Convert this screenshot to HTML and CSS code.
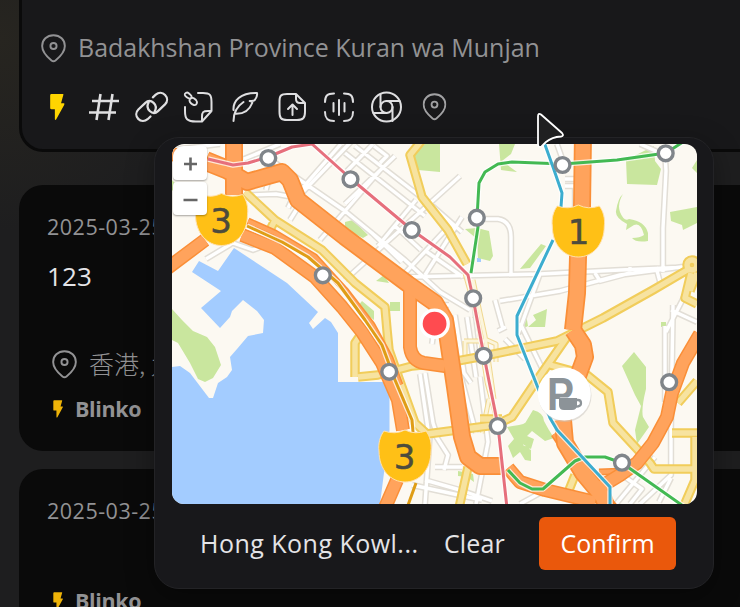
FILE: index.html
```html
<!DOCTYPE html>
<html lang="en">
<head>
<meta charset="utf-8">
<title>Notes</title>
<link rel="stylesheet" href="styles.css">
</head>
<body>
<svg class="symbols" aria-hidden="true">
  <symbol id="pin" viewBox="0 0 26 30"><path d="M13 1.2C6.1 1.2 1.2 6 1.2 12.4c0 6.8 5.2 11.4 9.7 15.1q2.1 1.7 4.2 0c4.5-3.7 9.7-8.3 9.7-15.1C24.8 6 19.900 1.200 13 1.200Z"/><circle cx="13" cy="12.400" r="3.200"/></symbol>
  <symbol id="bolt" viewBox="0 0 16 28"><path d="M2 0h12q1 0 .6 1L12.100 10H15q1.300 0 .7 1.200L7 27q-1 1.500-1.500 0V16.500H2q-1.500 0-1.500-1.500V1.500Q.5 0 2 0Z"/></symbol>
</svg>
<main class="feed">
  <section class="editor">
    <div class="place"><svg class="pin"><use href="#pin"/></svg><span>Badakhshan Province Kuran wa Munjan</span></div>
    <div class="tools">
      <svg class="bolt" viewBox="-8.700 -2 32 32"><use href="#bolt" width="15" height="28"/></svg>
      <svg class="heavy" viewBox="0 0 32 32"><path d="M12.500 3 8.500 29M24.500 3l-4 26M4 10h27M1 21.500h27"/></svg>
      <svg viewBox="1.300 1.200 28.700 28.700"><path d="M19 19.500c1.600-2.900 1.300-5.400-1-7.600s-5.200-2.200-7.400-.1l-6.300 6c-2.500 2.500-2.400 6-.1 8.400s5.800 2.500 8.400.3l2.600-2.400M13.500 11.500c-1.600 2.900-1.300 5.400 1 7.600s5.200 2.200 7.400.1l6.300-6c2.500-2.500 2.400-6 .1-8.400s-5.800-2.500-8.400-.3l-2.600 2.400"/></svg>
      <svg viewBox="1 0 32 32"><path d="M16 2h5c7 0 8.500 2 8.500 9v9L20 30.500h-6C5 30.500 3 28 3 20v-4M29.500 20H26c-5 0-6 1-6 6v4"/><path class="fine" d="M8.600 7.700C6 7.700 3 5 2.800 3.900 2.500 2 5 .8 6.700 2.200l1.800 1.700c1.500 1.400 1.500 2.900.1 3.800M8.300 7.600c2-1.700 4.200-.2 5.700 1.400 2 2.400.6 5.600-2.100 5-2-.4-4.400-2.700-4.400-4.400q0-1.200.8-2"/></svg>
      <svg viewBox="1 0 32 32"><path d="M4.500 30c0-9 4-15 10-19M4.500 19C4 10 11 1.500 28 2c.5 2.500-.5 5-2.300 7.200-1 1.200-3.700.8-5 .8 1.300.3 3 .8 2.500 2-2.500 6.500-8.200 11-16.200 10.800"/></svg>
      <svg viewBox="1 0 32 32"><path d="M20 3H11C5 3 3.500 4.500 3.500 10v11c0 6 1.500 8 7.500 8h10c6 0 8-2 8-8V12L20 3ZM20 3v5c0 3 1 4 4 4h5M16.500 24V14M12 18l4.500-4.500L21 18"/></svg>
      <svg viewBox="1 0 32 32"><path d="M2 11c0-6 2-8.500 9-8.500M21 2.500c7 0 9 2.500 9 8.500M2 21c0 6 2 9 9 9M21 30c7 0 9-3 9-9M10.500 12v8.500M16 9v15M21.500 12v8.500"/></svg>
      <svg viewBox=".5 0 32 32"><circle cx="16" cy="16" r="14.500"/><circle cx="16" cy="16" r="6"/><path d="M16 10h13M22 16v14M16 22H3M10 16V3"/></svg>
      <svg class="soft" viewBox="-3.500 -2 32 32"><use href="#pin" width="24" height="28"/></svg>
    </div>
  </section>
  <article class="card">
    <time>2025-03-25</time>
    <p class="body">123</p>
    <div class="place zh" lang="zh"><svg class="pin"><use href="#pin"/></svg><span>香港, 九龙</span></div>
    <div class="kind"><svg><use href="#bolt"/></svg><span>Blinko</span></div>
  </article>
  <article class="card second">
    <time>2025-03-25</time>
    <div class="kind"><svg><use href="#bolt"/></svg><span>Blinko</span></div>
  </article>
</main>

<div class="popover">
  <div class="map">
    <svg class="canvas" viewBox="172 144 525 360">
      <defs>
        <g id="minor">
          <path d="M355 146 430 204 462 232M345 153 425 216M374 146 387 156 380 163M172 150 220 144M244 159 280 144M268 158 345 211 405 260 440 292 470 310M254 179H288M274 159l-8 31M300 195l70-73M298 193l43-49M320 240l63-73M252 195l24-1 22 4M290 220l15-24M345 204l50-48M345 280l115-104M378 246l38-46M405 273l46-49M425 275l37-58M372 233l30 29M394 225l27 25M427 252l36 25M440 216l13 12M404 277 540 274 620 270 690 267M480 219h18q13 2 13 18v36M500 301l60-10 60-16 69-9M540 274l-22 60M595 273l5 8 30-8v-6M656 267l4 15M665 153l1 18-3 57v44M557 144l5 14M565 179h10M565 186h10v22M373 144l-26 27M640 144l18 8M449 305h-18M474 301l6 49M495 300l8 29M455 315l9 58 7 10M467 317l9 60M498 331l8-4M425 373l8 50 3 9M420 374l8 55M430 433l-5 71M434 433l14 22-4 15M435 467h27M480 377l8 65-12 62M461 377l15 56M425 480l35 10 32 11M412 485l70 15M520 323l38 78M673 305l-2 120v50l-31 29M665 326v76M671 310l26 12M684 297l-18 35M671 478l-12 24M622 475l20 14-12 15M655 457l-39 47M540 493l-20 11M230 242l23 8 24-9M206 259l25-15M288 208l12-25M505 339l20 20M438 300l-6 44"/>
        </g>
        <g id="yellow">
          <path d="M245 192 275 220 322 250 355 283 385 307 387 330 389 350 402 387 415 423 427 434 495 425 512 417 535 383 567 337M275 220l-4 8M427 134 410 155 422 197 448 230 467 264M358 377 378 375 412 366 452 362 484 356 557 341 603 318 653 290 689 269M355 377V343L366 327M550 365 587 375 608 392 613 423 650 463 654 469H697M672 433h25M678 403 697 381M695 437v43l-12 28M468 467 459 508M691 273l-6 25 12 6M697 273l-7 18M480 419h22M575 475l-8 20"/>
          <circle cx="692" cy="265" r="5"/>
        </g>
        <g id="thin"><path d="M465 273l12 43 10 66 11 42M473 280l12 56 9 63M464 341h22M465 341v20M485 339l11 5v18M489 399l-7 34"/></g>
        <g id="wide">
          <path d="M234 134v61M573 330 583 345 585 357 578 376M583 134 582 207 578 257 577 293 573 330M563 420 565 443 583 473 603 497 609 514M228 171 247 182 282 172 290 180 298 200 345 237 408 284 435 303 445 320 447 333 455 387 462 437 468 457 480 466H501"/>
        </g>
        <g id="mid">
          <path d="M172 154 208 165 228 173M410 290v57q2 14 14 16l21 3M165 270 205 240M242 235 275 248 315 277 342 307 362 332 382 363 398 400 403 430M397 480 384 510M700 334 683 363 672 393 667 417 653 443 637 463 620 475 597 489M508 468 520 482 545 490 595 502"/>
        </g>
        <g id="slip"><path d="M208 155 230 164M248 221 275 233 315 257 345 290 372 325 390 358 400 385M554 434 600 504M599 472l26-1M569 455l45 51"/></g>
        <path id="shield" d="M-21-25Q-10-21 0-26 10-21 21-25C25-20 27-12 26-5 26 14 14 26 0 26S-26 14-26-5C-27-12-25-20-21-25Z"/>
      </defs>
      <path class="land" d="M172 144h525v360H172z"/>
      <path class="water" d="M234 248 287 283 318 312 309 323 313 329 325 318 331 322 338 333V382h51.500v48L380 504H172V367L180 366 190 373 209 398h4L218 383l9-6 5-7-2-13 7-8 11-13 15-3 1-13-7-9-14-11-11 11-2 6-10 11-19-20 20-17-29-19 7-11 19 10ZM477 258h4v4h-4zM392 306h3v3h-3zM691 217h4v4h-4z"/>
      <path class="park" d="M172 309 182 320 193 331 207 337 215 347 221 365 213 378 205 382 198 379 190 363 178 343 172 340ZM425 144h15v28l-22-2-5-16ZM499 144h16l-4 10-9 7 15 11-16-2ZM477 228l12 3 4 25-3 5-12-3-1-19-12-10ZM626 160l28-14 1 15 6 8-4 16-30-1ZM623 194q-6 10-3 18 4 10 9 7 16 2 19 14v8q-12 2-16-3 8 0 12-3-3-13-10-10l-8 5 1-6q-12-6-11-13 2-13 7-17ZM670 212l27-5v16l-14 7-1-5-11-4ZM697 160l-5 8 5 5ZM520 269l21-25 5 2-16 22ZM522 313l4 1 2 12-6 3ZM533 315l14-6-2 18h-17l8-7ZM634 352l12 15v22q-5 20-3 28l6 10-12 17-2-14 6-24-6-11-13-29ZM507 427l12-2q9-1 12-10v14l-8 8v8l8 5v11l-6-1-5-8-7 6-5-12 6-7ZM533 410q11 3 11 11 4 8 10 17l-9 3-13-10-5 5 7 3-3 10-12-7 8-13-3-4ZM525 446l5 1-2 7-5-3ZM661 322h5v5h-5zM345 222l8-2 15 15-5 3-18-9ZM376 281l8-6 5 8ZM357 307l5-6 12 10v9ZM390 302h10v9h-10zM458 471l15 3 1 8-7-5-9-1ZM472 318l5-8 3 4ZM172 180l5 5-5 6Z"/>
      <use href="#minor" class="minor-edge"/><use href="#minor" class="minor-fill"/>
      <use href="#thin" class="thin-edge"/><use href="#thin" class="thin-fill"/>
      <use href="#yellow" class="yellow-edge"/><use href="#yellow" class="yellow-fill"/>
      <use href="#slip" class="slip-edge"/><use href="#slip" class="slip-fill"/>
      <use href="#mid" class="mid-edge"/><use href="#wide" class="wide-edge"/>
      <use href="#mid" class="mid-fill"/><use href="#wide" class="wide-fill"/>
      <path class="rail halo" d="M247 226 282 242 308 257 338 283 365 320 382 345 395 380 412 420 413 432"/>
      <path class="rail ochre" d="M247 226 282 242 308 257 338 283 365 320 382 345 395 380 412 420 413 432M416 483 407 508"/>
      <path class="rail halo" d="M208 159 233 165 248 163 268 157 292 147 312 144 350 178 412 230 450 257 468 275 473 298 484 356 498 426 507 508"/>
      <path class="rail red" d="M208 159 233 165 248 163 268 157 292 147 312 144 350 178 412 230 450 257 468 275 473 298 484 356 498 426 507 508"/>
      <path class="rail halo" d="M471 273 478 227 477 218 479 183 485 172 498 164 512 162 563 164 617 160 666 153 686 140M508 470 520 483 532 489H543L575 461 585 457H605L622 463 686 508"/>
      <path class="rail green" d="M471 273 478 227 477 218 479 183 485 172 498 164 512 162 563 164 617 160 666 153 686 140M508 470 520 483 532 489H543L575 461 585 457H605L622 463 686 508"/>
      <path class="rail halo" d="M544 142 553 167 562 193 561 207M553 240 517 316V335L538 388 550 418 557 430 610 487V508"/>
      <path class="rail blue" d="M544 142 553 167 562 193 561 207M553 240 517 316V335L538 388 550 418 557 430 610 487V508"/>
      <g class="stations"><circle cx="268.300" cy="158" r="7.400"/><circle cx="350.500" cy="179.300" r="7.400"/><circle cx="411.800" cy="230" r="7.400"/><circle cx="476.800" cy="217.700" r="7.400"/><circle cx="473.200" cy="298.300" r="7.400"/><circle cx="562.500" cy="165" r="7.400"/><circle cx="665.700" cy="153.300" r="7.400"/><circle cx="322.800" cy="275.300" r="7.400"/><circle cx="389.200" cy="371.800" r="7.400"/><circle cx="483.600" cy="355.800" r="7.400"/><circle cx="497.700" cy="426" r="7.400"/><circle cx="622" cy="462.700" r="7.400"/><circle cx="669.200" cy="382.200" r="7.400"/></g>
      <g class="route">
        <use href="#shield" x="221.500" y="219.500"/><text x="221" y="233">3</text>
        <use href="#shield" x="578.300" y="231"/><text x="578.500" y="243.500">1</text>
        <use href="#shield" x="405" y="456"/><text x="404.500" y="469">3</text>
      </g>
      <g class="parking">
        <circle class="shade" cx="565" cy="395.500" r="26.500"/><circle class="disc" cx="564.300" cy="394" r="26.500"/>
        <text transform="translate(547 409.500) scale(.86 1)">P</text>
        <path class="cup-edge" d="M560.500 399h17v3q4-1 4 3t-5 3q-1 3-5 3h-7q-4 0-4-4Z"/>
        <path class="cup" d="M559 398h18v7q0 5-5 5h-8q-5 0-5-5Z"/><path class="handle" d="M576 400h2q3 0 3 3.300t-5 3.300"/>
      </g>
      <circle class="marker" cx="434.600" cy="323.700" r="13.600"/>
    </svg>
    <div class="zoom"><button><svg viewBox="0 0 34 34"><path d="M11 18h13M17.500 11.500v13"/></svg></button><button><svg viewBox="0 0 34 34"><path d="M10.500 18h14"/></svg></button></div>
  </div>
  <div class="actions"><span class="address">Hong Kong Kowl...</span><button class="clear">Clear</button><button class="confirm">Confirm</button></div>
</div>
<svg class="cursor" viewBox="0 0 30 38"><path d="M2 4.500Q2 .5 5 2.500L26 21q2.500 3-1 3.500-9 .5-15 5.500L5.500 34.500Q2 36 2 32Z"/></svg>
</body>
</html>
```
FILE: styles.css
```css
* { box-sizing: border-box; }
html { overflow: hidden; }
body {
  margin: 0;
  width: 740px;
  height: 607px;
  overflow: hidden;
  position: relative;
  background: radial-gradient(circle at 0 40px, #272520 0, #1e1e1f 190px);
  font-family: "Open Sans", "Noto Sans CJK SC", sans-serif;
  color: #e4e4e7;
}
svg { display: block; flex: none; }
button { border: 0; padding: 0; font: inherit; color: inherit; background: none; }
.symbols { position: absolute; width: 0; height: 0; }

.feed { padding-left: 19px; width: 740px; height: 607px; overflow: hidden; }
.editor {
  height: 152px;
  padding: 30px 0 0 19px;
  background: #18181a;
  border: 3px solid #0a0a0a;
  border-width: 0 0 3px 3px;
  border-radius: 0 0 0 24px;
}
.place { display: flex; align-items: center; gap: 12px; height: 36px; color: #929294; font-size: 25px; white-space: nowrap; }
.place span { margin-top: -2px; }
.pin { width: 25px; height: 29px; fill: none; stroke: #929294; stroke-width: 2; }
.editor .place span { letter-spacing: -0.02px; }
.tools { display: flex; gap: 15.200px; margin-top: 25px; }
.tools svg { width: 32px; height: 32px; overflow: visible; fill: none; stroke: #dfdfe1; stroke-width: 2; stroke-linecap: round; stroke-linejoin: round; }
.tools .fine { stroke-width: 1.9; }
.tools .heavy { stroke-width: 2.6; stroke-linecap: butt; }
.tools .bolt { fill: #ffd500; stroke: none; }
.tools .soft { stroke: #a1a1a3; }

.card { margin-top: 33px; height: 266px; padding: 28px; border-radius: 24px 0 0 24px; background: #0a0a0a; color: #929294; }
.card.second { margin-top: 18px; }
.card time { display: block; height: 28px; line-height: 28px; font-size: 21.5px; letter-spacing: 0.5px; white-space: nowrap; }
.body { margin: 16px 0 0; height: 38px; line-height: 38px; font-size: 26px; color: #e4e4e7; letter-spacing: .1px; }
.zh { margin: 51px 0 0 5px; font-family: "Noto Sans CJK SC", sans-serif; font-weight: 300; }
.kind { display: flex; align-items: center; gap: 12px; height: 30px; margin: 11px 0 0 6px; font-size: 21.5px; font-weight: 700; letter-spacing: -0.35px; }
.kind svg { width: 10px; height: 18px; margin-top: 2px; fill: #eeb308; }
.second .kind { margin-top: 60px; }

.popover {
  position: absolute;
  left: 154px;
  top: 137px;
  width: 560px;
  height: 452px;
  padding: 6px 16px 0 17px;
  background: #18181b;
  border: 1px solid #232326;
  border-radius: 25px;
  box-shadow: 0 8px 28px rgba(0, 0, 0, .35);
}
.map { position: relative; width: 525px; height: 360px; border-radius: 12px; overflow: hidden; }
.canvas { width: 525px; height: 360px; fill: none; stroke-linejoin: round; }
.land { fill: #fcf9f2; }
.water { fill: #a3ccff; }
.park { fill: #c9e69e; }
.minor-edge { stroke: #e2ded6; stroke-width: 6.4; }
.minor-fill { stroke: #fff; stroke-width: 3.4; }
.thin-edge { stroke: #f0d890; stroke-width: 5; }
.thin-fill { stroke: #fcf5dc; stroke-width: 3; }
.yellow-edge { stroke: #f1cd5b; stroke-width: 9.5; }
.yellow-fill { stroke: #f7e3a0; stroke-width: 5.4; }
.slip-edge { stroke: #fa8f38; stroke-width: 7; }
.slip-fill { stroke: #ffa35c; stroke-width: 4; }
.mid-edge { stroke: #fa8f38; stroke-width: 14; }
.mid-fill { stroke: #ffa35c; stroke-width: 11; }
.wide-edge { stroke: #fa8f38; stroke-width: 18; }
.wide-fill { stroke: #ffa35c; stroke-width: 14.5; }
.rail { stroke-width: 3; }
.rail.halo { stroke: #fff; stroke-opacity: .75; stroke-width: 5.5; }
.ochre { stroke: #df9d16; }
.red { stroke: #e66f7c; }
.green { stroke: #43b953; }
.blue { stroke: #3cadcf; }
.stations { fill: #fff; stroke: #80858a; stroke-width: 3.4; }
.route use { fill: #ffc016; stroke: #ffe1ae; stroke-width: 1; }
.route text { fill: #4c4b3d; stroke: #4c4b3d; stroke-width: .5; font: 34px "DejaVu Sans", sans-serif; text-anchor: middle; }
.shade { fill: #c7c4bd; opacity: .5; }
.disc { fill: #fff; }
.parking text { fill: #8c9398; font: 700 47px "Liberation Sans", sans-serif; }
.cup { fill: #8c9398; }
.cup-edge { fill: #fff; stroke: #fff; stroke-width: 3; }
.handle { stroke: #8c9398; stroke-width: 2.3; }
.marker { fill: #ff4b50; stroke: #fff; stroke-width: 3.4; }

.zoom { position: absolute; left: 1px; top: 2px; display: grid; gap: 2px; }
.zoom button { width: 34px; height: 33.5px; border-radius: 4px; background: #fff; box-shadow: 0 1px 2px rgba(0, 0, 0, .35); }
.zoom svg { width: 34px; height: 34px; stroke: #666; stroke-width: 2.6; }
.zoom button:first-child { border-top-left-radius: 11px; }

.actions { display: flex; align-items: center; margin-top: 13px; padding: 0 21px 0 28px; height: 53px; font-size: 25px; line-height: 34px; white-space: nowrap; }
.address { width: 244px; margin-top: -2px; letter-spacing: .48px; }
.clear { width: 95px; margin-top: -2px; text-align: left; letter-spacing: .1px; }
.confirm { width: 137px; height: 53px; padding-bottom: 2px; border-radius: 6px; background: #ea580c; color: #fff; }

.cursor { position: absolute; left: 536px; top: 112px; width: 30px; height: 38px; fill: #202021; stroke: #fff; stroke-width: 1.8; stroke-linejoin: round; }
```
